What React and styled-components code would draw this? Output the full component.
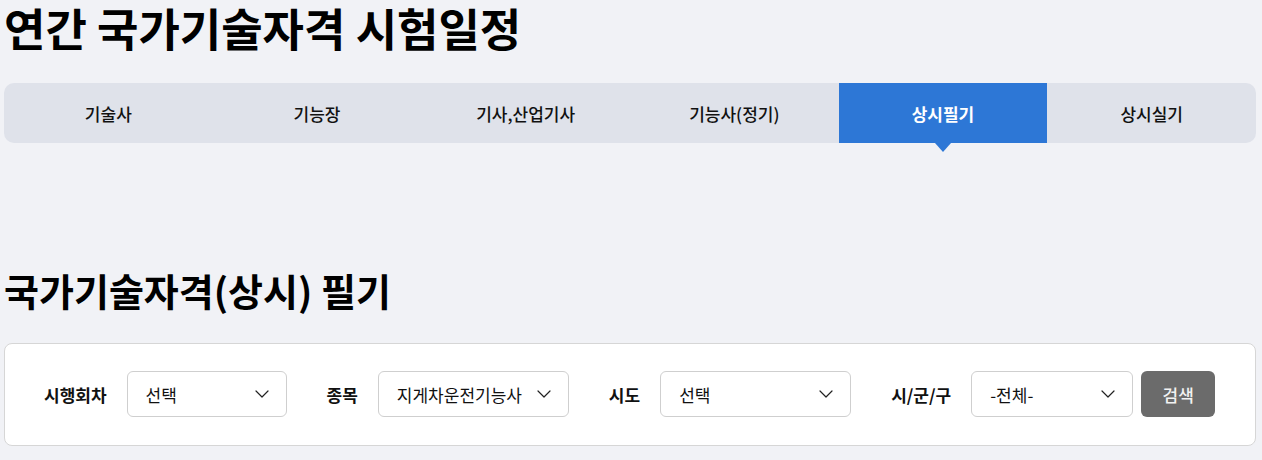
import styled, { createGlobalStyle } from "styled-components";

const GlobalStyle = createGlobalStyle`
  body {
    margin: 0;
    background: #f1f2f6;
    font-family: "Noto Sans CJK KR", "Noto Sans", sans-serif;
    color: #111;
  }
`;

const tabs = ["기술사", "기능장", "기사,산업기사", "기능사(정기)", "상시필기", "상시실기"];

const filters = [
  { label: "시행회차", value: "선택", width: 160 },
  { label: "종목", value: "지게차운전기능사", width: 191 },
  { label: "시도", value: "선택", width: 191 },
  { label: "시/군/구", value: "-전체-", width: 162 },
];

const Chevron = () => (
  <svg width="14" height="8" viewBox="0 0 14 8" fill="none" stroke="#222" strokeWidth="1.2" strokeLinecap="round" strokeLinejoin="round">
    <path d="M1 1 7 7 13 1" />
  </svg>
);

const App = () => {
  return (
    <>
      <GlobalStyle />
      <S.Page>
        <S.Title>연간 국가기술자격 시험일정</S.Title>
        <S.TabBar>
          {tabs.map((t) => (
            <S.Tab key={t} $active={t === "상시필기"}>
              {t}
            </S.Tab>
          ))}
        </S.TabBar>
        <S.SectionTitle>국가기술자격(상시) 필기</S.SectionTitle>
        <S.FilterBox>
          {filters.map((f, i) => (
            <S.Field key={f.label}>
              <S.Label>{f.label}</S.Label>
              <S.Select $w={f.width}>
                <span>{f.value}</span>
                <Chevron />
              </S.Select>
              {i === filters.length - 1 && <S.SearchButton>검색</S.SearchButton>}
            </S.Field>
          ))}
        </S.FilterBox>
      </S.Page>
    </>
  );
};

export default App;

const S = {
  Page: styled.div`
    padding: 0 6px 0 4px;
  `,

  Title: styled.h1`
    margin: 0;
    padding-top: 0;
    font-size: 45px;
    font-weight: 700;
    line-height: 66px;
    margin-top: -5px;
    color: #000;
  `,

  TabBar: styled.div`
    margin-top: 22px;
    display: grid;
    grid-template-columns: repeat(6, 1fr);
    height: 60px;
    background: #dfe2ea;
    border-radius: 10px;
  `,

  Tab: styled.div`
    position: relative;
    display: flex;
    align-items: center;
    justify-content: center;
    font-size: 17px;
    font-weight: ${(p) => (p.$active ? 700 : 500)};
    color: ${(p) => (p.$active ? "#fff" : "#111")};
    background: ${(p) => (p.$active ? "#2d77d6" : "transparent")};

    &::after {
      content: "";
      display: ${(p) => (p.$active ? "block" : "none")};
      position: absolute;
      left: 50%;
      bottom: -9px;
      transform: translateX(-50%);
      border-left: 8px solid transparent;
      border-right: 8px solid transparent;
      border-top: 9px solid #2d77d6;
    }
  `,

  SectionTitle: styled.h2`
    margin: 123px 0 0;
    font-size: 38px;
    font-weight: 700;
    line-height: 48px;
    color: #000;
  `,

  FilterBox: styled.div`
    margin-top: 29px;
    display: flex;
    align-items: center;
    gap: 40px;
    padding: 27px 39px 28px;
    background: #fff;
    border: 1px solid #d6d6d6;
    border-radius: 8px;
  `,

  Field: styled.div`
    display: flex;
    align-items: center;
  `,

  Label: styled.span`
    font-size: 17px;
    font-weight: 700;
    margin-right: 20px;
    white-space: nowrap;
  `,

  Select: styled.div`
    box-sizing: border-box;
    width: ${(p) => p.$w}px;
    height: 46px;
    display: flex;
    align-items: center;
    justify-content: space-between;
    padding: 0 17px 0 18px;
    border: 1px solid #cfcfcf;
    border-radius: 6px;
    font-size: 17px;
    color: #111;
    white-space: nowrap;
  `,

  SearchButton: styled.button`
    margin-left: 8px;
    width: 74px;
    height: 46px;
    border: none;
    border-radius: 6px;
    background: #6b6b6b;
    color: #f2f2f2;
    font-family: inherit;
    font-size: 17px;
    font-weight: 500;
  `,
};
